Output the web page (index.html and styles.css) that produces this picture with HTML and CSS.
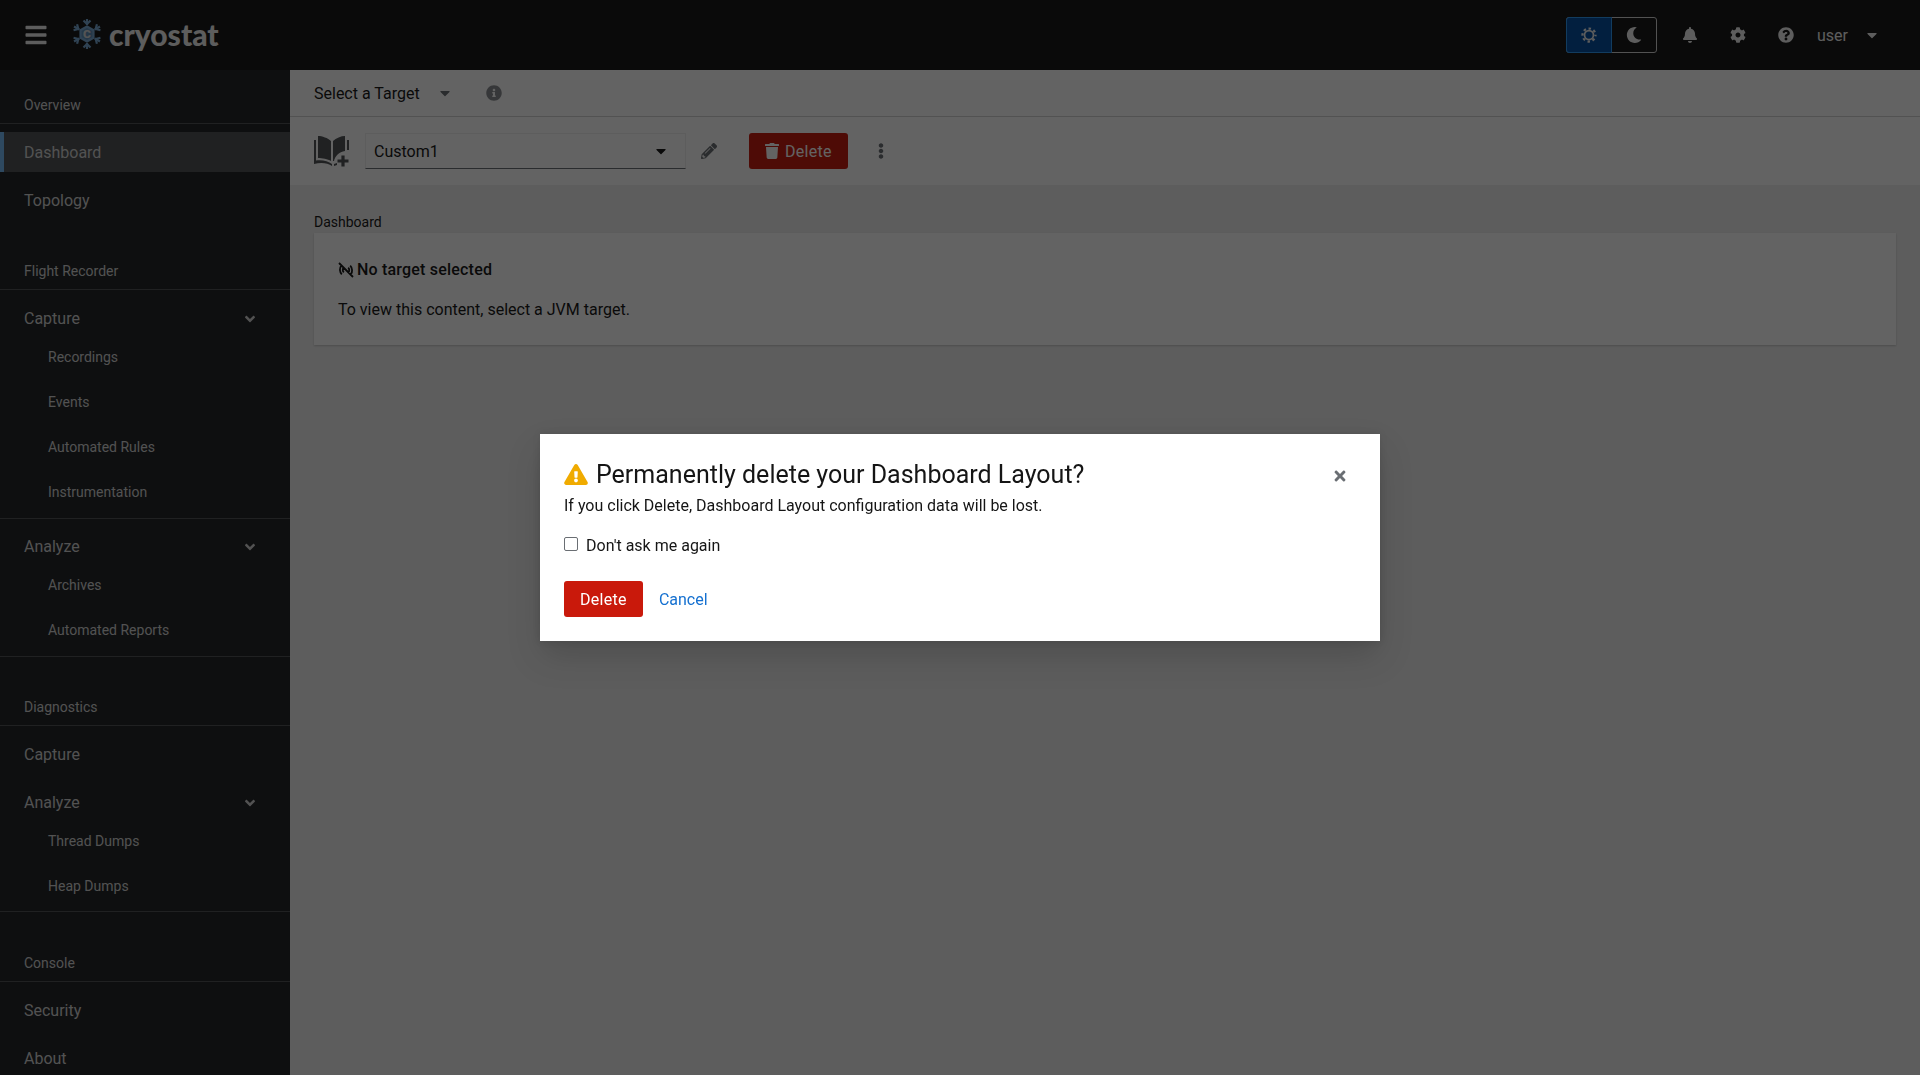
FILE: index.html
```html
<!DOCTYPE html>
<html lang="en">
<head>
<meta charset="UTF-8">
<title>Cryostat</title>
<link rel="stylesheet" href="styles.css">
</head>
<body>
<header class="masthead">
  <svg class="icon burger" viewBox="0 0 448 512"><path d="M16 132h416c8.837 0 16-7.163 16-16V76c0-8.837-7.163-16-16-16H16C7.163 60 0 67.163 0 76v40c0 8.837 7.163 16 16 16zm0 160h416c8.837 0 16-7.163 16-16v-40c0-8.837-7.163-16-16-16H16c-8.837 0-16 7.163-16 16v40c0 8.837 7.163 16 16 16zm0 160h416c8.837 0 16-7.163 16-16v-40c0-8.837-7.163-16-16-16H16c-8.837 0-16 7.163-16 16v40c0 8.837 7.163 16 16 16z"/></svg>
  <div class="brand">
    <svg class="flake" viewBox="0 0 32 32" fill="none" stroke-width="2.2">
      <g><path d="M16 7V1"/><path d="M12.5 2.5 16 6l3.5-3.5"/></g>
      <g transform="rotate(60 16 16)"><path d="M16 7V1"/><path d="M12.5 2.5 16 6l3.5-3.5"/></g>
      <g transform="rotate(120 16 16)"><path d="M16 7V1"/><path d="M12.5 2.5 16 6l3.5-3.5"/></g>
      <g transform="rotate(180 16 16)"><path d="M16 7V1"/><path d="M12.5 2.5 16 6l3.5-3.5"/></g>
      <g transform="rotate(240 16 16)"><path d="M16 7V1"/><path d="M12.5 2.5 16 6l3.5-3.5"/></g>
      <g transform="rotate(300 16 16)"><path d="M16 7V1"/><path d="M12.5 2.5 16 6l3.5-3.5"/></g>
      <path class="flake-hex" d="M16 8.5 22.5 12.2V19.8L16 23.5 9.500 19.800V12.200Z"/>
      <text class="flake-c" x="16" y="20">c</text>
    </svg>
    <span class="brand-name">cryostat</span>
  </div>
  <div class="masthead-tools">
    <div class="theme-toggle">
      <button class="theme-btn selected">
        <svg class="icon sun" viewBox="0 0 32 32">
          <circle cx="16" cy="16" r="9" stroke-width="3.500"/>
          <circle cx="16" cy="16" r="13" stroke-width="4.500" stroke-dasharray="5 5.210" stroke-dashoffset="2.500"/>
        </svg>
      </button>
      <button class="theme-btn">
        <svg class="icon" viewBox="0 0 512 512"><path d="M283.211 512c78.962 0 151.079-35.925 198.857-94.792 7.068-8.708-.639-21.43-11.562-19.35-124.203 23.654-238.262-71.576-238.262-196.954 0-72.222 38.662-138.635 101.498-174.394 9.686-5.512 7.25-20.197-3.756-22.23A258.156 258.156 0 0 0 283.211 0c-141.309 0-256 114.511-256 256 0 141.309 114.511 256 256 256z"/></svg>
      </button>
    </div>
    <span class="tool"><svg class="icon" viewBox="0 0 448 512"><path d="M224 512c35.32 0 63.97-28.65 63.97-64H160.03c0 35.35 28.65 64 63.97 64zm215.39-149.71c-19.32-20.76-55.47-51.99-55.47-154.29 0-77.7-54.48-139.9-127.94-155.16V32c0-17.67-14.32-32-31.98-32s-31.98 14.33-31.98 32v20.84C118.56 68.1 64.08 130.3 64.08 208c0 102.3-36.15 133.53-55.47 154.29-6 6.45-8.66 14.16-8.61 21.71.11 16.4 12.98 32 32.1 32h383.8c19.12 0 32-15.6 32.1-32 .05-7.55-2.61-15.27-8.61-21.71z"/></svg></span>
    <span class="tool"><svg class="icon" viewBox="0 0 512 512"><path d="M487.4 315.7l-42.6-24.6c4.3-23.2 4.3-47 0-70.2l42.6-24.6c4.9-2.8 7.1-8.6 5.5-14-11.1-35.6-30-67.8-54.7-94.6-3.8-4.1-10-5.1-14.8-2.3L380.8 110c-17.9-15.4-38.5-27.3-60.8-35.1V25.8c0-5.6-3.9-10.5-9.4-11.7-36.7-8.2-74.3-7.8-109.2 0-5.5 1.2-9.4 6.1-9.4 11.7V75c-22.2 7.9-42.8 19.8-60.8 35.1L88.7 85.5c-4.9-2.8-11-1.9-14.8 2.3-24.7 26.7-43.6 58.9-54.7 94.6-1.7 5.4.6 11.2 5.5 14L67.3 221c-4.3 23.2-4.3 47 0 70.2l-42.6 24.6c-4.9 2.8-7.1 8.6-5.5 14 11.1 35.6 30 67.8 54.7 94.6 3.8 4.1 10 5.1 14.8 2.3l42.6-24.6c17.9 15.4 38.5 27.3 60.8 35.1v49.2c0 5.6 3.9 10.5 9.4 11.7 36.7 8.2 74.3 7.8 109.2 0 5.5-1.2 9.4-6.1 9.4-11.7v-49.2c22.2-7.9 42.8-19.8 60.8-35.1l42.6 24.6c4.9 2.8 11 1.9 14.8-2.3 24.7-26.7 43.6-58.9 54.7-94.6 1.5-5.5-.7-11.3-5.6-14.1zM256 336c-44.1 0-80-35.9-80-80s35.9-80 80-80 80 35.9 80 80-35.9 80-80 80z"/></svg></span>
    <span class="tool"><svg class="icon" viewBox="0 0 512 512"><path d="M504 256c0 136.997-111.043 248-248 248S8 392.997 8 256C8 119.083 119.043 8 256 8s248 111.083 248 248zM262.655 90c-54.497 0-89.255 22.957-116.549 63.758-3.536 5.286-2.353 12.415 2.715 16.258l34.699 26.31c5.205 3.947 12.621 3.008 16.665-2.122 17.864-22.658 30.113-35.797 57.303-35.797 20.429 0 45.698 13.148 45.698 32.958 0 14.976-12.363 22.667-32.534 33.976C247.128 238.528 216 254.941 216 296v4c0 6.627 5.373 12 12 12h56c6.627 0 12-5.373 12-12v-1.333c0-28.462 83.186-29.647 83.186-106.667 0-58.002-60.165-102-116.531-102zM256 338c-25.365 0-46 20.635-46 46 0 25.364 20.635 46 46 46s46-20.636 46-46c0-25.365-20.635-46-46-46z"/></svg></span>
    <span class="user-menu">user
      <svg class="icon caret" viewBox="0 0 320 512"><path d="M31.3 192h257.3c17.8 0 26.7 21.5 14.1 34.1L174.1 354.8c-7.8 7.8-20.5 7.8-28.3 0L17.2 226.1C4.6 213.5 13.500 192 31.3 192z"/></svg>
    </span>
  </div>
</header>

<div class="shell">
  <nav class="sidebar">
    <section class="nav-section first">
      <h2 class="nav-title">Overview</h2>
      <ul class="nav-list">
        <li class="nav-item active">Dashboard</li>
        <li class="nav-item">Topology</li>
      </ul>
    </section>
    <section class="nav-section">
      <h2 class="nav-title">Flight Recorder</h2>
      <div class="nav-group">
        <div class="nav-item">Capture <svg class="icon chevron" viewBox="0 0 320 512"><path d="M143 352.3L7 216.3c-9.4-9.4-9.4-24.6 0-33.9l22.6-22.6c9.4-9.4 24.6-9.4 33.900 0l96.400 96.400 96.400-96.400c9.400-9.400 24.600-9.400 33.900 0l22.600 22.600c9.400 9.400 9.400 24.600 0 33.900l-136 136c-9.200 9.400-24.400 9.400-33.800 0z"/></svg></div>
        <ul class="sub-list">
          <li>Recordings</li>
          <li>Events</li>
          <li>Automated Rules</li>
          <li>Instrumentation</li>
        </ul>
      </div>
      <div class="nav-group">
        <div class="nav-item">Analyze <svg class="icon chevron" viewBox="0 0 320 512"><path d="M143 352.3L7 216.3c-9.4-9.4-9.4-24.6 0-33.9l22.6-22.6c9.4-9.4 24.6-9.4 33.900 0l96.400 96.400 96.400-96.400c9.400-9.400 24.600-9.400 33.900 0l22.600 22.600c9.400 9.400 9.400 24.600 0 33.900l-136 136c-9.200 9.400-24.400 9.400-33.800 0z"/></svg></div>
        <ul class="sub-list">
          <li>Archives</li>
          <li>Automated Reports</li>
        </ul>
      </div>
    </section>
    <section class="nav-section tight">
      <h2 class="nav-title">Diagnostics</h2>
      <div class="nav-group last">
        <div class="nav-item">Capture</div>
        <div class="nav-item spaced">Analyze <svg class="icon chevron" viewBox="0 0 320 512"><path d="M143 352.3L7 216.3c-9.4-9.4-9.4-24.6 0-33.9l22.6-22.6c9.4-9.4 24.6-9.4 33.900 0l96.400 96.400 96.400-96.400c9.400-9.400 24.600-9.400 33.900 0l22.600 22.600c9.400 9.400 9.400 24.600 0 33.900l-136 136c-9.200 9.400-24.400 9.400-33.800 0z"/></svg></div>
        <ul class="sub-list">
          <li>Thread Dumps</li>
          <li>Heap Dumps</li>
        </ul>
      </div>
    </section>
    <section class="nav-section">
      <h2 class="nav-title">Console</h2>
      <ul class="nav-list">
        <li class="nav-item">Security</li>
        <li class="nav-item">About</li>
      </ul>
    </section>
  </nav>

  <main class="content">
    <div class="target-bar">
      <span>Select a Target</span>
      <svg class="icon caret target-caret" viewBox="0 0 320 512"><path d="M31.3 192h257.3c17.8 0 26.7 21.5 14.1 34.1L174.1 354.8c-7.8 7.8-20.5 7.8-28.3 0L17.2 226.1C4.6 213.5 13.500 192 31.3 192z"/></svg>
      <svg class="icon info" viewBox="0 0 512 512"><path d="M256 8C119.043 8 8 119.083 8 256c0 136.997 111.043 248 248 248s248-111.003 248-248C504 119.083 392.957 8 256 8zm0 110c23.196 0 42 18.804 42 42s-18.804 42-42 42-42-18.804-42-42 18.804-42 42-42zm56 254c0 6.627-5.373 12-12 12h-88c-6.627 0-12-5.373-12-12v-24c0-6.627 5.373-12 12-12h12v-64h-12c-6.627 0-12-5.373-12-12v-24c0-6.627 5.373-12 12-12h64c6.627 0 12 5.373 12 12v100h12c6.627 0 12 5.373 12 12v24z"/></svg>
    </div>
    <div class="layout-bar">
      <svg class="book" viewBox="0 0 38 34">
        <path d="M5 2C9 2 15 4 18 7V27C15 25 9 24 5 24Z"/>
        <path d="M20 7C23 4 28 2 32 2V17C26 18 22 22 21 27H20Z"/>
        <path d="M1 6H3V26.500C9 25.500 15 27 19 30V32C15 29 8 28 1 30Z"/>
        <path d="M34 6H36V16H34Z"/>
        <path d="M21 30 24 29V31L21 32Z"/>
        <path d="M28.400 21.500H31.600V25.400H35.500V28.600H31.600V32.500H28.400V28.600H24.500V25.400H28.400Z"/>
      </svg>
      <div class="layout-select">
        <span>Custom1</span>
        <svg class="icon caret" viewBox="0 0 320 512"><path d="M31.3 192h257.3c17.8 0 26.7 21.5 14.1 34.1L174.1 354.8c-7.8 7.8-20.5 7.8-28.3 0L17.2 226.1C4.6 213.5 13.500 192 31.3 192z"/></svg>
      </div>
      <svg class="icon pencil" viewBox="0 0 512 512"><path d="M497.9 142.1l-46.1 46.1c-4.7 4.7-12.3 4.7-17 0l-111-111c-4.7-4.7-4.7-12.3 0-17l46.1-46.1c18.7-18.7 49.1-18.7 67.9 0l60.1 60.1c18.8 18.7 18.8 49.1 0 67.9zM284.2 99.8L21.6 362.4.4 483.9c-2.9 16.4 11.4 30.6 27.8 27.8l121.5-21.3 262.6-262.6c4.7-4.7 4.7-12.3 0-17l-111-111c-4.8-4.7-12.4-4.7-17.1 0zM124.1 339.9c-5.5-5.5-5.5-14.3 0-19.8l154-154c5.5-5.5 14.3-5.5 19.8 0s5.5 14.3 0 19.8l-154 154c-5.5 5.5-14.3 5.5-19.8 0zM88 424h48v36.3l-64.5 11.3-31.1-31.1L51.7 376H88v48z"/></svg>
      <button class="btn-danger toolbar-delete">
        <svg class="icon trash" viewBox="0 0 448 512"><path d="M432 32H312l-9.4-18.7A24 24 0 0 0 281.1 0H166.8a23.72 23.72 0 0 0-21.4 13.3L136 32H16A16 16 0 0 0 0 48v32a16 16 0 0 0 16 16h416a16 16 0 0 0 16-16V48a16 16 0 0 0-16-16zM53.2 467a48 48 0 0 0 47.9 45h245.8a48 48 0 0 0 47.9-45L416 128H32z"/></svg>
        Delete
      </button>
      <svg class="icon kebab" viewBox="0 0 192 512"><path d="M96 184c39.8 0 72 32.2 72 72s-32.2 72-72 72-72-32.2-72-72 32.2-72 72-72zM24 80c0 39.8 32.2 72 72 72s72-32.2 72-72S135.8 8 96 8 24 40.2 24 80zm0 352c0 39.8 32.2 72 72 72s72-32.2 72-72-32.2-72-72-72-72 32.2-72 72z"/></svg>
    </div>
    <div class="dash-body">
      <div class="dash-label">Dashboard</div>
      <div class="card">
        <h3 class="card-title">
          <svg class="no-signal" viewBox="0 0 16 16" fill="none" stroke-width="1.800">
            <path d="M3.200 3.800C1.300 6 1.500 10 3.800 12.300M5.600 5.600c-1.200 1.300-1.100 3.500.2 4.700M12.800 12.200c1.900-2.200 1.700-6.200-.6-8.500M10.400 10.400c1.200-1.300 1.100-3.500-.2-4.700M1 1l14 14"/>
          </svg>
          No target selected
        </h3>
        <p class="card-text">To view this content, select a JVM target.</p>
      </div>
    </div>
  </main>
</div>

<div class="backdrop">
  <div class="modal">
    <button class="modal-close">
      <svg class="icon" viewBox="0 0 352 512"><path d="M242.72 256l100.07-100.07c12.28-12.28 12.28-32.19 0-44.48l-22.24-22.24c-12.28-12.28-32.19-12.28-44.48 0L176 189.28 75.93 89.21c-12.28-12.28-32.19-12.28-44.48 0L9.21 111.45c-12.28 12.28-12.28 32.19 0 44.48L109.28 256 9.21 356.07c-12.28 12.28-12.28 32.19 0 44.48l22.24 22.24c12.28 12.28 32.2 12.28 44.48 0L176 322.72l100.07 100.07c12.28 12.28 32.2 12.28 44.48 0l22.24-22.24c12.28-12.28 12.28-32.19 0-44.48L242.72 256z"/></svg>
    </button>
    <h1 class="modal-title">
      <svg class="warn" viewBox="0 0 576 512"><path d="M569.517 440.013C587.975 472.007 564.806 512 527.94 512H48.054c-36.937 0-59.999-40.055-41.577-71.987L246.423 23.985c18.467-32.009 64.72-31.951 83.154 0l239.94 416.028zM288 354c-25.405 0-46 20.595-46 46s20.595 46 46 46 46-20.595 46-46-20.595-46-46-46zm-43.673-165.346l7.418 136c.347 6.364 5.609 11.346 11.982 11.346h48.546c6.373 0 11.635-4.982 11.982-11.346l7.418-136c.375-6.874-5.098-12.654-11.982-12.654h-63.383c-6.884 0-12.356 5.78-11.981 12.654z"/></svg>
      <span class="modal-title-text">Permanently delete your Dashboard Layout?</span>
    </h1>
    <p class="modal-text">If you click Delete, Dashboard Layout configuration data will be lost.</p>
    <label class="modal-check"><input type="checkbox"> Don't ask me again</label>
    <div class="modal-actions">
      <button class="btn-danger">Delete</button>
      <button class="btn-link">Cancel</button>
    </div>
  </div>
</div>
</body>
</html>
```

FILE: styles.css
```css
* {
  box-sizing: border-box;
}

html, body {
  height: 100%;
}

body {
  margin: 0;
  overflow: hidden;
  font-family: Roboto, "Noto Sans", sans-serif;
  font-size: 16px;
  color: #151515;
  background: #f0f0f0;
}

h1, h2, h3, p, ul {
  margin: 0;
  padding: 0;
  font-weight: normal;
}

ul {
  list-style: none;
}

button {
  font: inherit;
  border: 0;
  background: none;
  padding: 0;
}

.icon {
  display: block;
  width: 16px;
  height: 16px;
  fill: currentColor;
  flex: none;
}

/* masthead */
.masthead {
  display: flex;
  align-items: center;
  height: 70px;
  padding-left: 24px;
  background: #151515;
  color: #f0f0f0;
}

.burger {
  width: 24px;
  height: 24px;
}

.brand {
  display: flex;
  align-items: center;
  margin-left: 23px;
  margin-top: -3px;
  gap: 6px;
}

.flake {
  width: 32px;
  height: 32px;
}

.flake path {
  stroke: #78a9d4;
}

.flake-hex {
  fill: #5f8fb8;
}

.flake-c {
  fill: #d8d8d8;
  stroke: none;
  font-family: "Liberation Sans", sans-serif;
  font-size: 15px;
  font-weight: bold;
  text-anchor: middle;
}

.brand-name {
  font-family: "Lato", sans-serif;
  font-size: 30px;
  font-weight: 900;
  line-height: 32px;
  color: #f0f0f0;
}

.masthead-tools {
  display: flex;
  align-items: center;
  margin-left: auto;
}

.theme-toggle {
  display: flex;
  width: 91px;
  height: 36px;
  border: 1px solid #d2d2d2;
  border-radius: 3px;
  margin-right: 9px;
}

.theme-btn {
  display: flex;
  flex: 1;
  align-items: center;
  justify-content: center;
  color: #f0f0f0;
}

.theme-btn.selected {
  margin: -1px 0 -1px -1px;
  background: #004ca0;
  border: 1px solid #2b9af3;
  border-radius: 3px 0 0 3px;
}

.sun {
  fill: none;
  stroke: #f0f0f0;
}

.tool {
  display: flex;
  align-items: center;
  justify-content: center;
  width: 48px;
  height: 36px;
}

.user-menu {
  display: flex;
  align-items: center;
  margin-left: 7px;
  margin-right: 40px;
  color: #f0f0f0;
}

.user-menu .caret {
  margin-left: 16px;
}

.shell {
  display: flex;
  height: calc(100vh - 70px);
}

/* sidebar */
.sidebar {
  width: 290px;
  flex: none;
  overflow: hidden;
  background: #212427;
  color: #d2d2d2;
}

.nav-section {
  padding-top: 40px;
}

.nav-section.first {
  padding-top: 24px;
}

.nav-section.tight {
  padding-top: 39px;
}

.nav-title {
  padding: 1px 24px 7px;
  font-size: 14px;
  line-height: 21px;
  color: #d2d2d2;
  border-bottom: 1px solid #4f5255;
}

.nav-list {
  padding-top: 8px;
}

.nav-item {
  display: flex;
  align-items: center;
  height: 40px;
  padding: 2px 24px 0;
  line-height: 24px;
}

.nav-list .nav-item + .nav-item, .nav-item.spaced {
  margin-top: 8px;
}

.nav-item.active {
  background: #4f5255;
  box-shadow: inset 4px 0 0 #73bcf7;
}

.nav-group {
  padding-top: 8px;
}

.nav-group + .nav-group {
  padding-top: 7px;
}

.nav-group:has(.sub-list) {
  padding-bottom: 8px;
  border-bottom: 1px solid #4f5255;
}

.nav-group.last:has(.sub-list) {
  padding-bottom: 7px;
}

.chevron {
  margin-left: auto;
  margin-right: 11px;
  width: 10px;
  height: 16px;
}

.sub-list li {
  padding: 9px 48px 7px;
  font-size: 14px;
  line-height: 21px;
}

.sub-list li + li {
  margin-top: 8px;
}

/* main area */
.content {
  flex: 1;
  display: flex;
  flex-direction: column;
  min-width: 0;
}

.target-bar {
  display: flex;
  align-items: center;
  height: 47px;
  padding: 0 24px;
  background: #fff;
  border-bottom: 1px solid #d2d2d2;
  color: #151515;
}

.target-caret {
  margin-left: 17px;
  color: #6a6e73;
}

.info {
  margin-left: 33px;
  color: #8a8d90;
}

.layout-bar {
  display: flex;
  align-items: center;
  height: 68px;
  padding: 0 24px;
  background: #fff;
}

.book {
  width: 38px;
  height: 34px;
  flex: none;
  margin-left: -1px;
  fill: #4f5255;
}

.layout-select {
  display: flex;
  align-items: center;
  justify-content: space-between;
  width: 321px;
  height: 36px;
  margin-left: 14px;
  padding: 0 16px 0 8px;
  border: 1px solid #f0f0f0;
  border-bottom-color: #6a6e73;
}

.pencil {
  margin-left: 15px;
  color: #6a6e73;
}

.btn-danger {
  height: 36px;
  padding: 0 16px;
  background: #c9190b;
  color: #fff;
  border-radius: 3px;
  letter-spacing: .3px;
}

.toolbar-delete {
  display: flex;
  align-items: center;
  gap: 6px;
  margin-left: 32px;
}

.trash {
  width: 14px;
  height: 16px;
}

.kebab {
  margin-left: 25px;
  color: #6a6e73;
}

.dash-body {
  flex: 1;
  padding: 27px 24px 0;
}

.dash-label {
  font-size: 14px;
  line-height: 21px;
}

.card {
  height: 112px;
  padding: 25px 24px 0;
  background: #fff;
  box-shadow: 0 1px 2px rgba(3, 3, 3, .2);
}

.card-title {
  display: flex;
  align-items: center;
  gap: 3px;
  font-size: 16px;
  font-weight: 500;
  line-height: 24px;
  letter-spacing: .2px;
}

.no-signal {
  width: 16px;
  height: 16px;
  stroke: #151515;
}

.card-text {
  margin-top: 16px;
  line-height: 24px;
}

/* modal */
.backdrop {
  position: fixed;
  inset: 0;
  display: flex;
  align-items: center;
  justify-content: center;
  background: rgba(3, 3, 3, .62);
}

.modal {
  position: relative;
  width: 840px;
  padding: 24px;
  background: #fff;
  box-shadow: 0 16px 32px rgba(3, 3, 3, .16), 0 0 8px rgba(3, 3, 3, .1);
}

.modal-close {
  position: absolute;
  top: 34px;
  right: 32px;
  color: #6a6e73;
}

.modal-title {
  display: flex;
  align-items: center;
  gap: 8px;
  font-size: 25px;
  line-height: 30px;
  color: #151515;
}

.modal-title-text {
  padding-top: 2px;
}

.warn {
  width: 24px;
  height: 21px;
  flex: none;
  fill: #f0ab00;
}

.modal-text {
  margin-top: 4px;
  line-height: 24px;
}

.modal-check {
  display: flex;
  align-items: center;
  gap: 8px;
  margin-top: 16px;
  line-height: 24px;
}

.modal-check input {
  appearance: none;
  margin: -4px 0 0;
  width: 14px;
  height: 14px;
  background: #fff;
  border: 1px solid #6a6e73;
  border-radius: 2px;
}

.modal-actions {
  display: flex;
  align-items: center;
  gap: 16px;
  margin-top: 23px;
}

.btn-link {
  color: #1470d0;
}
```
